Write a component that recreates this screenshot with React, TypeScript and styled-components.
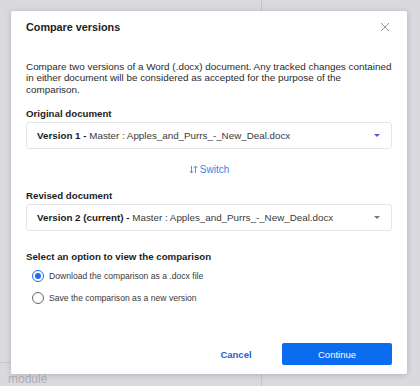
import React, { useState } from 'react';
import styled, { createGlobalStyle } from 'styled-components';

const GlobalStyle = createGlobalStyle`
    html, body {
        margin: 0;
        padding: 0;
        width: 420px;
        height: 386px;
        overflow: hidden;
        font-family: "Liberation Sans", Arial, sans-serif;
    }
`;

const Page = styled.div`
    position: relative;
    width: 420px;
    height: 386px;
    background: #dadade;
    display: grid;
    grid-template-columns: 262px 1fr;
    overflow: hidden;
`;

const BackPane = styled.div<{ divider?: boolean }>`
    border-right: ${p => (p.divider ? '1px solid #c4c4ca' : 'none')};
    display: flex;
    flex-direction: column;
    justify-content: flex-end;
    color: #b0b0b8;
    font-size: 12px;
`;

const BackText = styled.div`
    border-top: 1px solid #c8c8ce;
    padding: 10px 0 0 8px;
    height: 13px;
    line-height: 13px;
`;

const Modal = styled.div`
    position: absolute;
    left: 11px;
    top: 11px;
    width: 396px;
    height: 363px;
    background: #fff;
    border-radius: 2px;
    box-shadow: 0 1px 6px rgba(0, 0, 0, 0.18);
    box-sizing: border-box;
    padding: 6px 15px 9px 15px;
    display: flex;
    flex-direction: column;
    color: #222;
`;

const Header = styled.div`
    display: flex;
    justify-content: space-between;
    align-items: center;
    height: 20px;
`;

const Title = styled.div`
    font-size: 10.8px;
    font-weight: bold;
    color: #1c1c1c;
`;

const CloseBtn = styled.button`
    border: none;
    background: none;
    padding: 0;
    margin-right: 2px;
    width: 10px;
    height: 10px;
    display: flex;
    cursor: pointer;
`;

const Description = styled.p`
    margin: 24px 0 0;
    font-size: 9.9px;
    line-height: 11.4px;
    color: #2a2a2a;
`;

const Label = styled.div<{ top: number }>`
    margin-top: ${p => p.top}px;
    font-size: 9.7px;
    font-weight: bold;
    color: #1c1c1c;
`;

const Select = styled.div`
    margin-top: 3px;
    height: 27px;
    border: 1px solid #e6e6ea;
    border-radius: 3px;
    box-sizing: border-box;
    display: flex;
    align-items: center;
    justify-content: space-between;
    padding: 0 10px 0 10px;
    font-size: 9.8px;
    color: #3a3a3a;
`;

const Strong = styled.span`
    font-weight: bold;
    color: #1c1c1c;
`;

const Caret = styled.span<{ color: string }>`
    width: 0;
    height: 0;
    border-left: 3px solid transparent;
    border-right: 3px solid transparent;
    border-top: 3px solid ${p => p.color};
    margin-right: 1px;
`;

const SwitchRow = styled.div`
    display: flex;
    justify-content: center;
    margin-top: 12px;
    height: 17px;
    align-items: center;
`;

const SwitchBtn = styled.button`
    border: none;
    background: none;
    color: #3d82e8;
    font-family: inherit;
    font-size: 10px;
    padding: 0;
    display: flex;
    align-items: center;
    gap: 2px;
    cursor: pointer;
`;

const Options = styled.div`
    margin-top: 6px;
    display: flex;
    flex-direction: column;
    gap: 7px;
    padding-left: 6px;
`;

const Option = styled.label`
    display: flex;
    align-items: center;
    gap: 5px;
    font-size: 8.6px;
    color: #3a3a3a;
    height: 15px;
    cursor: pointer;
`;

const Radio = styled.span<{ checked: boolean }>`
    width: 12px;
    height: 12px;
    box-sizing: border-box;
    border-radius: 50%;
    border: 1px solid ${p => (p.checked ? '#1a6ef0' : '#666')};
    display: flex;
    align-items: center;
    justify-content: center;
    &::after {
        content: '';
        width: 6px;
        height: 6px;
        border-radius: 50%;
        background: ${p => (p.checked ? '#1a6ef0' : 'transparent')};
    }
`;

const Footer = styled.div`
    margin-top: auto;
    display: flex;
    justify-content: flex-end;
    align-items: center;
`;

const CancelBtn = styled.button`
    border: none;
    background: none;
    color: #1c5fd3;
    font-family: inherit;
    font-weight: bold;
    font-size: 9.5px;
    width: 92px;
    height: 22px;
    cursor: pointer;
`;

const ContinueBtn = styled.button`
    border: none;
    border-radius: 2px;
    background: #0b6cf0;
    color: #fff;
    font-family: inherit;
    font-size: 9.5px;
    width: 110px;
    height: 22px;
    cursor: pointer;
`;

export default function App() {
    const [choice, setChoice] = useState(0);
    const options = ['Download the comparison as a .docx file', 'Save the comparison as a new version'];

    return (
        <>
            <GlobalStyle />
            <Page>
                <BackPane divider>
                    <BackText>modulé</BackText>
                </BackPane>
                <BackPane />
                <Modal>
                    <Header>
                        <Title>Compare versions</Title>
                        <CloseBtn aria-label="Close">
                            <svg width="10" height="10" viewBox="0 0 10 10">
                                <path d="M1 1 L9 9 M9 1 L1 9" stroke="#9a9a9a" strokeWidth="1" />
                            </svg>
                        </CloseBtn>
                    </Header>
                    <Description>
                        Compare two versions of a Word (.docx) document. Any tracked changes contained in either document will be considered as accepted for the purpose of the comparison.
                    </Description>
                    <Label top={13}>Original document</Label>
                    <Select>
                        <span>
                            <Strong>Version 1 - </Strong>Master : Apples_and_Purrs_-_New_Deal.docx
                        </span>
                        <Caret color="#5b57d9" />
                    </Select>
                    <SwitchRow>
                        <SwitchBtn>
                            <svg width="9" height="9" viewBox="0 0 9 9">
                                <path d="M2.5 1 V8 M0.8 6.2 L2.5 8 L4.2 6.2 M6.5 8 V1 M4.8 2.8 L6.5 1 L8.2 2.8" stroke="#3d82e8" strokeWidth="0.9" fill="none" />
                            </svg>
                            Switch
                        </SwitchBtn>
                    </SwitchRow>
                    <Label top={12}>Revised document</Label>
                    <Select>
                        <span>
                            <Strong>Version 2 (current) - </Strong>Master : Apples_and_Purrs_-_New_Deal.docx
                        </span>
                        <Caret color="#777" />
                    </Select>
                    <Label top={20}>Select an option to view the comparison</Label>
                    <Options>
                        {options.map((o, i) => (
                            <Option key={o} onClick={() => setChoice(i)}>
                                <Radio checked={choice === i} />
                                {o}
                            </Option>
                        ))}
                    </Options>
                    <Footer>
                        <CancelBtn>Cancel</CancelBtn>
                        <ContinueBtn>Continue</ContinueBtn>
                    </Footer>
                </Modal>
            </Page>
        </>
    );
}
